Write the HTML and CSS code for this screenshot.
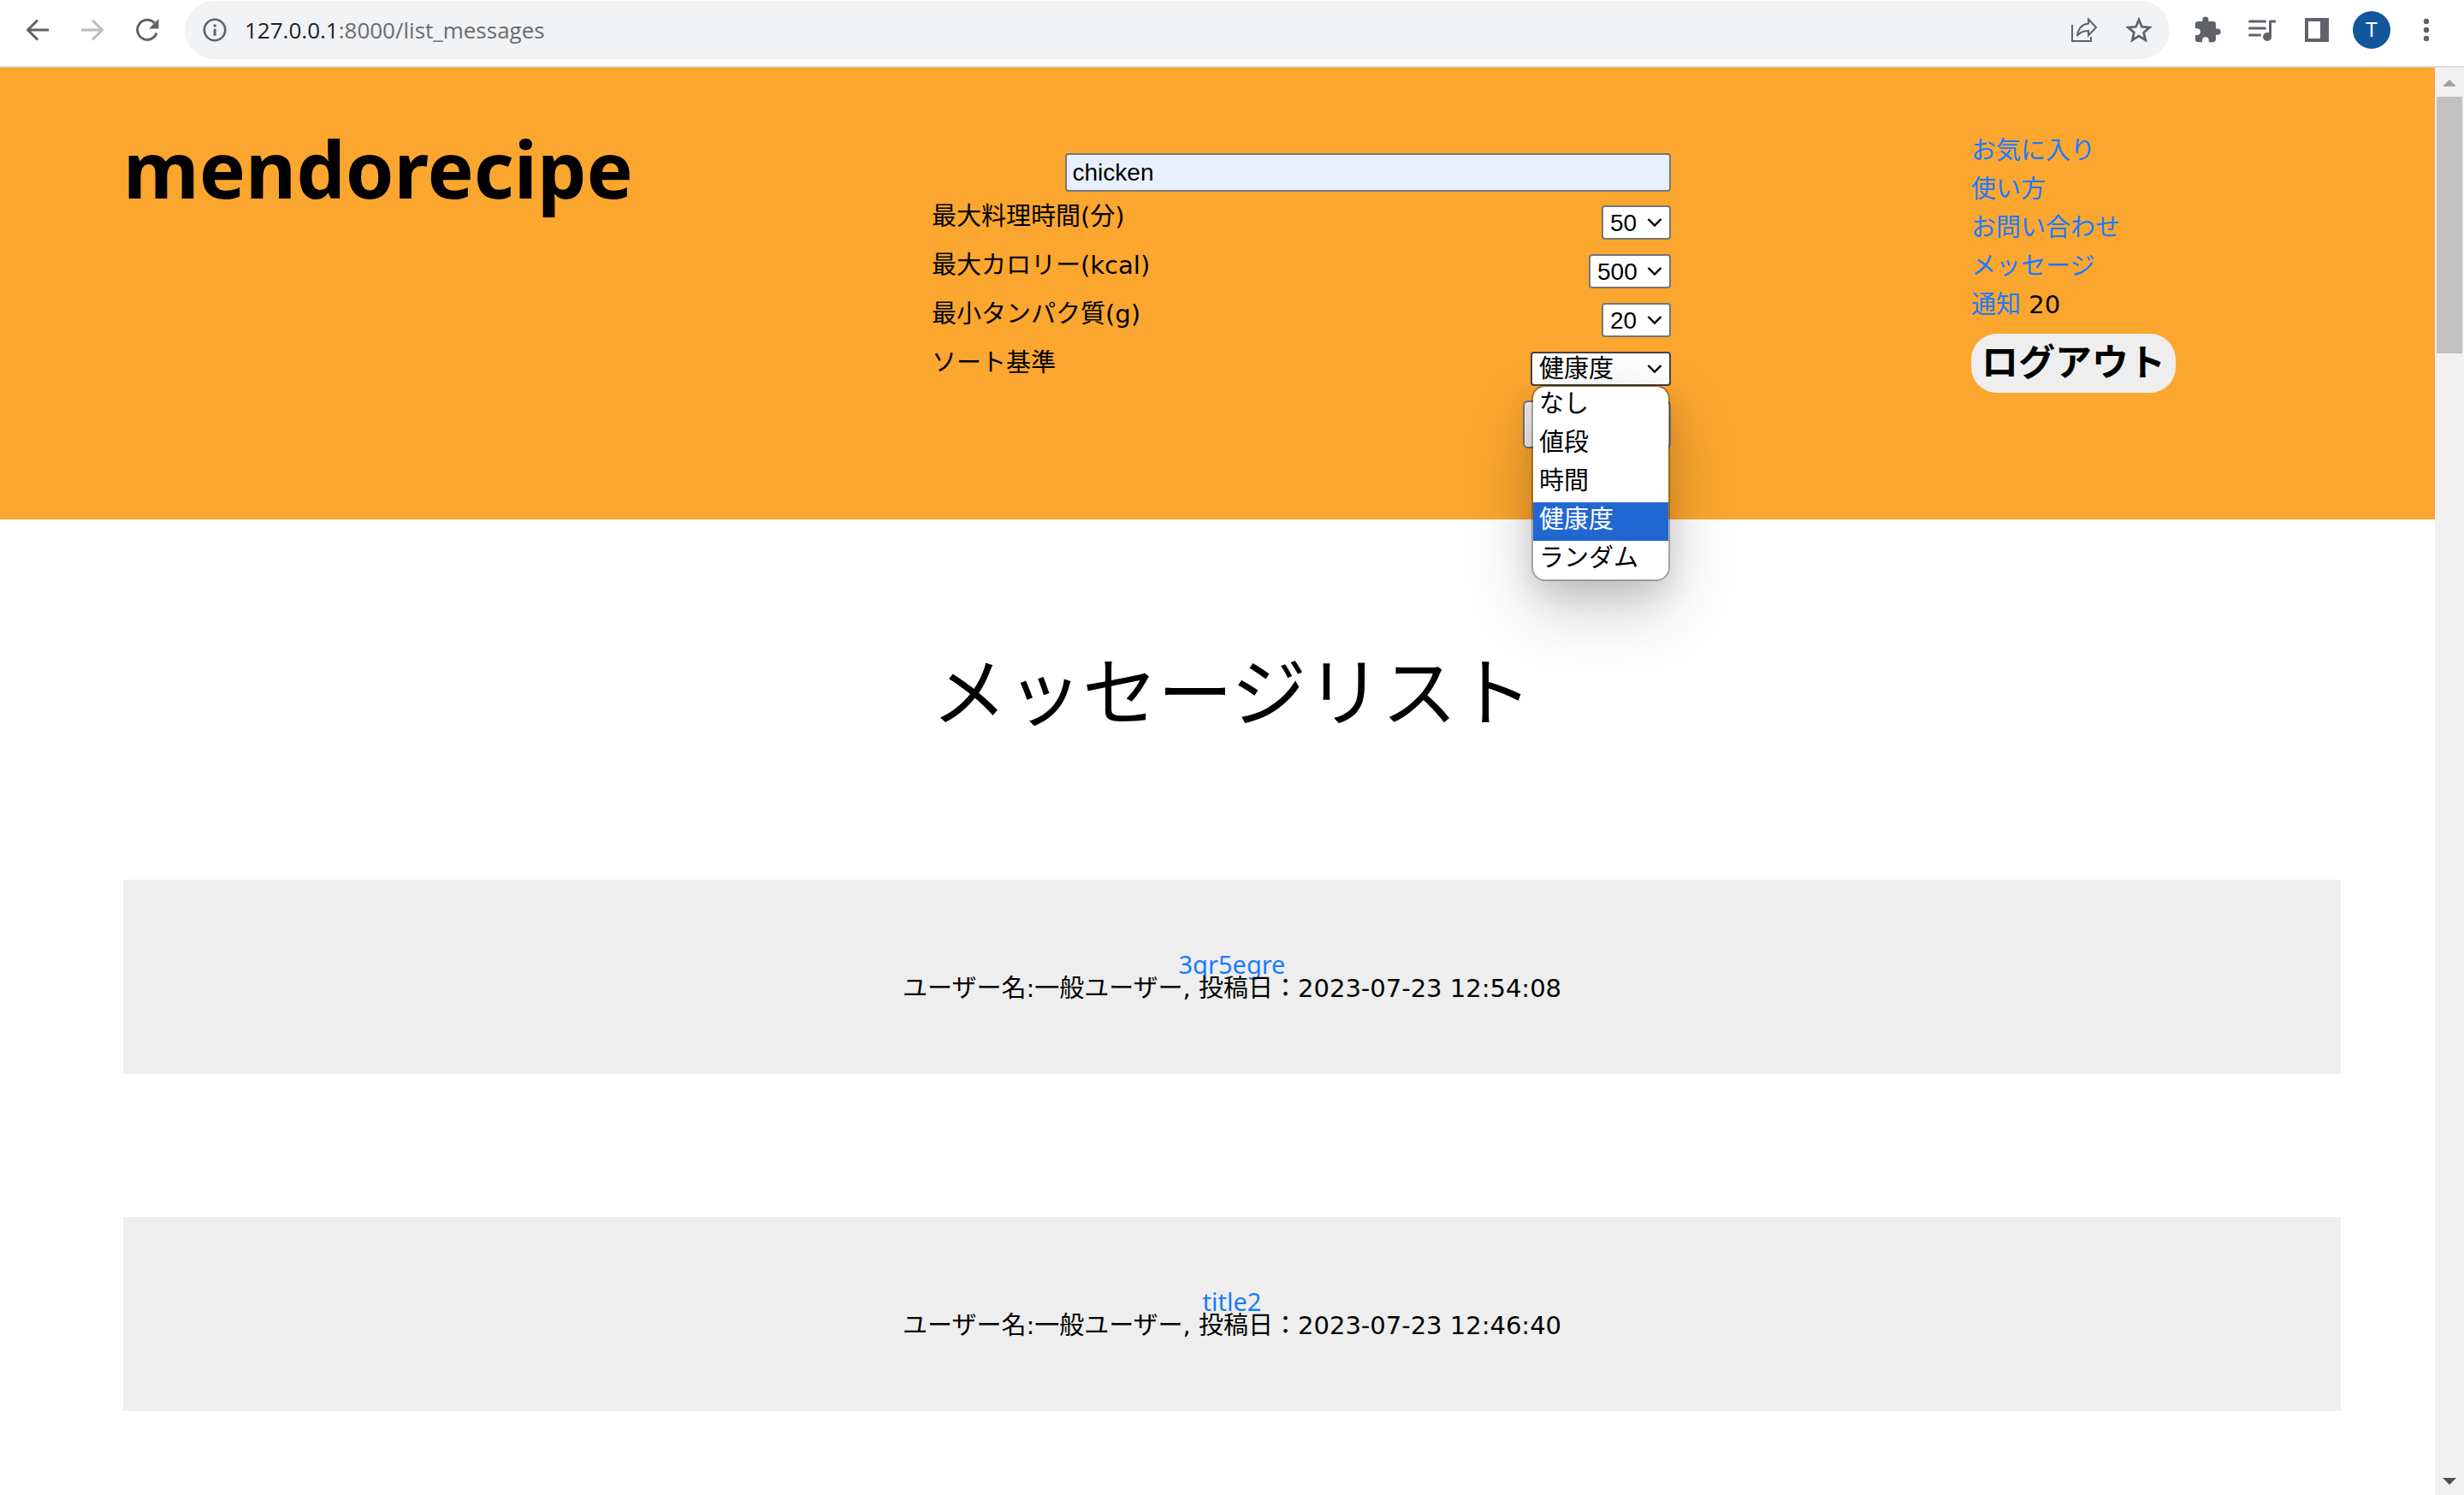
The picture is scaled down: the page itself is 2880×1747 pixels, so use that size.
FILE: index.html
```html
<!DOCTYPE html>
<html lang="ja">
<head>
<meta charset="utf-8">
<title>mendorecipe</title>
<link rel="stylesheet" href="styles.css">
</head>
<body>
<div class="toolbar">
  <button class="tool" type="button" aria-label="戻る"><svg width="28" height="28" viewBox="0 0 28 28" fill="none" stroke="#5f6368" stroke-width="3"><path d="M27 14H3M14 2.500L2.500 14 14 25.500"/></svg></button>
  <button class="tool" type="button" aria-label="進む"><svg width="28" height="28" viewBox="0 0 28 28" fill="none" stroke="#babcbe" stroke-width="3"><path d="M1 14h24M14 2.500L25.500 14 14 25.500"/></svg></button>
  <button class="tool" type="button" aria-label="再読み込み"><svg width="28" height="28" viewBox="0 0 28 28"><path d="M25 17.500A11.500 11.500 0 1 1 22.500 6" fill="none" stroke="#5f6368" stroke-width="3"/><path d="M27.500 1v11.500H16z" fill="#5f6368"/></svg></button>
  <div class="omnibox">
    <button class="site-info" type="button" aria-label="サイト情報"><svg width="28" height="28" viewBox="0 0 28 28"><circle cx="14" cy="14" r="12.200" fill="none" stroke="#5f6368" stroke-width="2.600"/><path d="M12.600 7.500h3v3h-3zM12.600 12.700h3v8h-3z" fill="#5f6368"/></svg></button>
    <span class="url"><span class="host">127.0.0.1</span>:8000/list_messages</span>
    <button class="tool" type="button" aria-label="共有"><svg width="32" height="32" viewBox="0 0 32 32" fill="none" stroke="#5f6368" stroke-width="2"><path d="M2 10v19h22v-5M21 3.500l9 9.500-9 9.500v-5.500c-6 0-10 1.500-13 6 1-8 5-13.500 13-14.500z"/></svg></button>
    <button class="tool" type="button" aria-label="ブックマーク"><svg width="32" height="32" viewBox="0 0 32 32" fill="none" stroke="#5f6368" stroke-width="2.800"><path d="M16 4l3.500 8.300 9 .8-6.800 5.900 2 8.800L16 23.100l-7.700 4.700 2-8.800-6.800-5.900 9-.8z"/></svg></button>
  </div>
  <button class="tool" type="button" aria-label="拡張機能"><svg width="34" height="34" viewBox="0 0 24 24" fill="#5f6368"><path d="M20.500 11H19V7c0-1.100-.9-2-2-2h-4V3.500a2.500 2.500 0 0 0-5 0V5H4c-1.100 0-2 .9-2 2v3.800h1.500a2.700 2.700 0 0 1 0 5.400H2V20c0 1.100.9 2 2 2h3.800v-1.500a2.700 2.700 0 0 1 5.400 0V22H17c1.100 0 2-.9 2-2v-4h1.500a2.500 2.500 0 0 0 0-5z"/></svg></button>
  <button class="tool" type="button" aria-label="メディア"><svg width="32" height="28" viewBox="0 0 32 28"><path d="M1.500 4h18M1.500 12h18M1.500 20h12" fill="none" stroke="#5f6368" stroke-width="3" stroke-linecap="round"/><path d="M31 4h-5.500v17" fill="none" stroke="#5f6368" stroke-width="3" stroke-linecap="round" stroke-linejoin="round"/><circle cx="22" cy="22" r="5" fill="#5f6368"/></svg></button>
  <button class="tool" type="button" aria-label="サイドパネル"><svg width="28" height="28" viewBox="0 0 28 28"><path d="M0 0h28v28H0zM4 4v20h14V4z" fill="#5f6368" fill-rule="evenodd"/></svg></button>
  <button class="tool" type="button" aria-label="プロフィール"><span class="avatar">T</span></button>
  <button class="tool" type="button" aria-label="メニュー"><svg width="8" height="28" viewBox="0 0 8 28" fill="#5f6368"><circle cx="4" cy="4" r="3.200"/><circle cx="4" cy="14" r="3.200"/><circle cx="4" cy="24" r="3.200"/></svg></button>
</div>

<div class="viewport">
  <div class="page">
    <header class="header">
      <h1 class="brand">mendorecipe</h1>
      <form class="search">
        <input class="keyword" type="text" value="chicken" aria-label="キーワード">
        <div class="row">
          <label for="time">最大料理時間(分)</label>
          <select id="time" class="select"><option>50</option></select>
        </div>
        <div class="row">
          <label for="kcal">最大カロリー(kcal)</label>
          <select id="kcal" class="select"><option>500</option></select>
        </div>
        <div class="row">
          <label for="protein">最小タンパク質(g)</label>
          <select id="protein" class="select"><option>20</option></select>
        </div>
        <div class="row">
          <label for="sort">ソート基準</label>
          <div class="sort">
            <select id="sort" class="select open"><option>健康度</option></select>
            <ul class="options" role="listbox" aria-label="ソート基準">
              <li role="option">なし</li>
              <li role="option">値段</li>
              <li role="option">時間</li>
              <li role="option" class="selected" aria-selected="true">健康度</li>
              <li role="option">ランダム</li>
            </ul>
          </div>
        </div>
        <button class="submit" type="button" aria-label="検索"></button>
      </form>
      <nav class="menu">
        <a href="#">お気に入り</a>
        <a href="#">使い方</a>
        <a href="#">お問い合わせ</a>
        <a href="#">メッセージ</a>
        <span><a href="#">通知</a> 20</span>
        <button class="logout" type="button">ログアウト</button>
      </nav>
    </header>
    <main class="main">
      <h2 class="title">メッセージリスト</h2>
      <article class="card">
        <a href="#">3qr5egre</a>
        <p>ユーザー名:一般ユーザー, 投稿日：<time>2023-07-23 12:54:08</time></p>
      </article>
      <article class="card">
        <a href="#">title2</a>
        <p>ユーザー名:一般ユーザー, 投稿日：<time>2023-07-23 12:46:40</time></p>
      </article>
    </main>
  </div>
  <div class="scrollbar" aria-hidden="true">
    <svg width="34" height="34" viewBox="0 0 34 34"><path d="M9 22l8-8 8 8z" fill="#a3a3a3"/></svg>
    <div class="thumb"></div>
    <svg class="down" width="34" height="34" viewBox="0 0 34 34"><path d="M9 14l8 8 8-8z" fill="#505050"/></svg>
  </div>
</div>
</body>
</html>
```
FILE: styles.css
```css
* { box-sizing: border-box; }

body {
  margin: 0;
  min-height: 100vh;
  display: flex;
  flex-direction: column;
  background: #fff;
  color: #000;
  font: 29px/45px "DejaVu Sans", "Noto Sans CJK JP", sans-serif;
}

h1, h2, p, ul { margin: 0; padding: 0; }
a { color: #1a7bff; text-decoration: none; }
svg { display: block; }

/* Browser toolbar */
.toolbar {
  display: flex;
  align-items: flex-start;
  padding: 1px 12px 8px;
  border-bottom: 2px solid #dadce0;
}

.tool,
.site-info {
  display: flex;
  align-items: center;
  justify-content: center;
  width: 64px;
  height: 68px;
  padding: 0;
  border: 0;
  background: none;
}

.omnibox {
  flex: 1;
  display: flex;
  align-items: center;
  height: 68px;
  margin: 0 12px;
  padding-right: 4px;
  border-radius: 34px;
  background: #f1f3f4;
}

.site-info { width: 70px; }

.url {
  flex: 1;
  color: #696c70;
  font: 26px/36px "Open Sans", sans-serif;
}

.host { color: #202124; }

.avatar {
  width: 44px;
  height: 44px;
  border-radius: 50%;
  background: #115799;
  color: #fff;
  font: 24px/44px Roboto, sans-serif;
  text-align: center;
}

/* Page area and scrollbar */
.viewport {
  flex: 1;
  display: flex;
}

.page {
  flex: 1;
  min-width: 0;
  overflow: hidden;
}

.scrollbar {
  width: 34px;
  display: flex;
  flex-direction: column;
  background: #f1f1f1;
}

.thumb {
  height: 300px;
  margin: 0 2px;
  background: #c1c1c1;
}

.down { margin-top: auto; }

/* Header */
.header {
  width: 100vw;
  display: grid;
  grid-template-columns: 35fr 32fr 13fr 16fr;
  align-items: start;
  padding: 73px 5vw 83px;
  background: #fba62f;
}

.brand {
  font: bold 91px/90px "Noto Sans", sans-serif;
}

.search {
  display: flex;
  flex-direction: column;
  align-items: flex-end;
  padding-top: 27px;
}

.keyword {
  width: 82%;
  height: 45px;
  margin-bottom: 8px;
  padding: 0 7px;
  border: 2px solid #767676;
  border-radius: 4px;
  background: #e8f0fe;
  color: #000;
  font: 28px "Liberation Sans", sans-serif;
}

.row {
  align-self: stretch;
  display: flex;
  justify-content: space-between;
  height: 57px;
  line-height: 43px;
}

.select {
  display: block;
  height: 40px;
  margin-top: 8px;
  padding: 0 37px 0 8px;
  appearance: none;
  border: 2px solid #767676;
  border-radius: 4px;
  background: #fff url("data:image/svg+xml,%3Csvg xmlns='http://www.w3.org/2000/svg' width='18' height='12' viewBox='0 0 18 12'%3E%3Cpath d='M1.500 2L9 9.500 16.500 2' fill='none' stroke='%23000' stroke-width='2.400'/%3E%3C/svg%3E") no-repeat right 8px center;
  color: #000;
  font: 28px "Liberation Sans", "Noto Sans CJK JP", sans-serif;
}

.sort { position: relative; }

.open {
  width: 164px;
  border-color: #444;
  font-size: 29px;
}

.options {
  position: absolute;
  z-index: 1;
  top: 47px;
  left: 1px;
  right: 1px;
  overflow: hidden;
  border: 2px solid rgba(0, 0, 0, 0.3);
  border-radius: 16px;
  background: #fff;
  background-clip: padding-box;
  box-shadow: 0 32px 80px rgba(0, 0, 0, 0.2), 0 16px 32px rgba(0, 0, 0, 0.1);
  list-style: none;
}

.options li {
  height: 45px;
  padding-left: 7px;
  line-height: 40px;
  white-space: nowrap;
}

.options .selected {
  background: #2267d1;
  color: #fff;
}

.submit {
  width: 20%;
  height: 56px;
  margin-top: 8px;
  border: 2px solid #767676;
  border-radius: 6px;
  background: #efefef;
}

.menu {
  grid-column: 4;
  display: flex;
  flex-direction: column;
  align-items: flex-start;
  padding-top: 2px;
}

.logout {
  height: 69px;
  margin-top: 11px;
  padding: 0 12px 9px;
  border: 0;
  border-radius: 30px;
  background: #eee;
  color: #000;
  font: bold 43px/60px "Noto Sans CJK JP", sans-serif;
}

/* Message list */
.main {
  width: 100vw;
  padding: 139px 5vw 97px;
}

.title {
  margin-bottom: 153px;
  font-size: 88px;
  font-weight: 400;
  line-height: 129px;
  text-align: center;
}

.card {
  padding: 84px 0 85px;
  background: #eee;
  line-height: 29px;
  text-align: center;
}

.card a {
  display: block;
  font-family: "Noto Sans", sans-serif;
}

.card + .card { margin-top: 167px; }
```
